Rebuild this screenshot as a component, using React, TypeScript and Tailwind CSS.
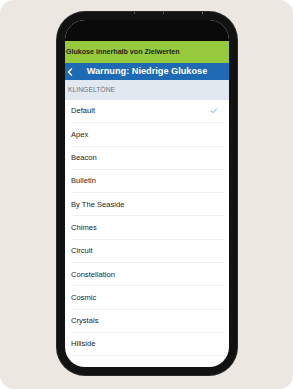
import { Check } from 'lucide-react'

const tones = [
  'Default',
  'Apex',
  'Beacon',
  'Bulletin',
  'By The Seaside',
  'Chimes',
  'Circuit',
  'Constellation',
  'Cosmic',
  'Crystals',
  'Hillside',
]

const font = { fontFamily: '"Liberation Sans", Arial, sans-serif' }

function ToneRow({ name, selected }: { name: string; selected?: boolean }) {
  return (
    <div className="flex h-[23.3px] shrink-0 items-center pl-[6px]">
      <div className="flex h-full flex-1 items-center justify-between border-b border-[#efefef] pr-[7px] mr-[4px]">
        <span className="text-[7.6px] text-[#1e1e1e]">{name}</span>
        {selected && <Check size={8} strokeWidth={2.2} className="text-[#3b86f0]" />}
      </div>
    </div>
  )
}

export default function App() {
  return (
    <div className="h-[389px] w-[293px] bg-white" style={font}>
      <div className="h-full rounded-[14px] bg-[#ece8e1] pl-[57px] pt-[12px]">
        {/* phone */}
        <div className="relative h-[363px] w-[180px] rounded-[28px] bg-[#121212] p-[8px] shadow-[0_0_0_1px_#2a2a2a]">
          <span className="absolute left-[77px] top-0 h-[2px] w-[1px] bg-[#555]" />
          <span className="absolute left-[106px] top-0 h-[2px] w-[1px] bg-[#555]" />
          <span className="absolute left-[145px] top-0 h-[2px] w-[1px] bg-[#777]" />

          {/* screen */}
          <div className="flex h-full flex-col overflow-hidden rounded-[20px] bg-white">
            <div className="h-[21px] shrink-0 bg-[#0a0a0a]" />

            <div className="flex h-[22px] shrink-0 items-center bg-[#97c93d] pl-[1px]">
              <span className="text-[7.1px] font-semibold text-[#1b2410]">Glukose innerhalb von Zielwerten</span>
            </div>

            <div className="relative flex h-[17px] shrink-0 items-center justify-center bg-[#1f6ab5]">
              <svg
                className="absolute left-[2px] top-[5px]"
                width="6"
                height="8"
                viewBox="0 0 6 8"
                fill="none"
                stroke="white"
                strokeWidth="1.5"
                strokeLinecap="round"
                strokeLinejoin="round"
              >
                <path d="M4.5 1 L1.5 4 L4.5 7" />
              </svg>
              <span className="text-[9.2px] font-bold text-white">Warnung: Niedrige Glukose</span>
            </div>

            <div className="flex h-[20px] shrink-0 items-center bg-[#e2e8f0] pl-[3px]">
              <span className="text-[6.8px] text-[#6f737a]">KLINGELTÖNE</span>
            </div>

            {tones.map((t, i) => (
              <ToneRow key={t} name={t} selected={i === 0} />
            ))}
          </div>
        </div>
      </div>
    </div>
  )
}
